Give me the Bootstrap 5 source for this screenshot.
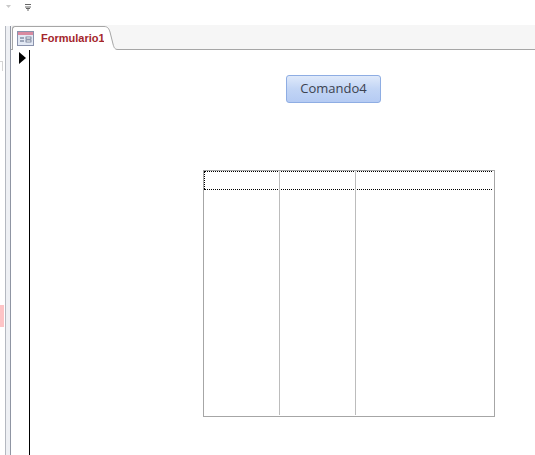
<!DOCTYPE html>
<html lang="es">
<head>
    <meta charset="UTF-8">
    <title>Formulario1</title>
    <link rel="stylesheet" href="https://cdn.jsdelivr.net/npm/bootstrap@5.3.3/dist/css/bootstrap.min.css">
    <style>
        html, body { height: 455px; overflow: hidden; background: #fff; font-family: "Open Sans", "Liberation Sans", sans-serif; }
        .qat-bar { height: 25px; padding-left: 5px; gap: 11px; }
        .work-area { height: 430px; }
        .side-gutter { width: 5px; }
        .side-tick { width: 3px; height: 10px; margin-top: 36px; border-top: 1px solid #d4d4d4; border-right: 1px solid #d4d4d4; }
        .side-mark { width: 4px; height: 22px; margin-top: 234px; background: #fdc4c6; }
        .side-strip { width: 6px; margin-top: 1px; background: #eef0f4; border-left: 1px solid #b4b8c0; border-right: 1px solid #8f95a3; }
        .doc-area { min-width: 0; }
        .tab-strip { height: 25px; background: #f6f6f6; border-bottom: 1px solid #a6a6a6; }
        .form-tab { height: 24px; width: 92px; margin-left: 1px; margin-bottom: -1px; padding-left: 4px; gap: 7px; background: #fff; border: 1px solid #a6a6a6; border-bottom: 0; border-right: 0; border-top-left-radius: 3px; color: #a4262c; font-family: "Liberation Sans", sans-serif; font-size: 11px; font-weight: 700; white-space: nowrap; }
        .tab-curve { width: 14px; height: 24px; margin-bottom: -1px; }
        .selector-col { width: 19px; border-right: 1px solid #000; padding: 2px 0 0 8px; }
        .form-body { min-width: 0; padding: 25px 0 0 173px; }
        .cmd-row { padding-left: 83px; }
        .cmd-btn { width: 95px; height: 28px; padding: 0 0 2px; border: 1px solid #8eade3; border-radius: 3px; background: linear-gradient(#dfe9fa, #c2d5f5 50%, #b5cbf3); color: #3c4250; font-family: "Open Sans", sans-serif; font-size: 13px; line-height: 24px; }
        .sub-grid { width: 292px; height: 247px; margin-top: 67px; background: #fff; border: 1px solid #a6a6a6; padding: 0 1px 1px 0; }
        .grid-col { border-right: 1px solid #bcbcbc; }
        .grid-col-a { width: 76px; }
        .grid-col-b { width: 76px; }
        .grid-head { height: 19px; margin-bottom: -19px; margin-right: 1px; border-top: 1px dotted #000; border-bottom: 1px dotted #000; }
        .first-cell { border-left: 1px dotted #000; width: 75px; height: 100%; }
    </style>
</head>
<body>
    <div class="qat-bar d-flex align-items-start">
        <svg width="8" height="10" viewBox="0 0 8 10"><path d="M1 5h5l-2.500 3z" fill="#c9c9c9"/></svg>
        <svg width="8" height="10" viewBox="0 0 8 10" class="mt-1"><path d="M1 .5h6" stroke="#666" fill="none"/><path d="M1 3h6M2 4.500h4M3 6h2" stroke="#666" fill="none"/></svg>
    </div>
    <div class="work-area d-flex">
        <div class="side-gutter flex-shrink-0">
            <div class="side-tick"></div>
            <div class="side-mark"></div>
        </div>
        <div class="side-strip flex-shrink-0"></div>
        <div class="doc-area d-flex flex-column flex-grow-1">
            <div class="tab-strip d-flex align-items-end flex-shrink-0">
                <div class="form-tab d-flex align-items-center flex-shrink-0">
                    <svg class="flex-shrink-0" width="17" height="15" viewBox="0 0 17 15">
                        <rect x=".5" y=".5" width="16" height="14" fill="#e3e9f4" stroke="#8a93ad"/>
                        <rect x="1" y="1" width="15" height="3" fill="#d98aa0"/>
                        <path d="M3 7h4M3 10h4" stroke="#55627f"/>
                        <rect x="9" y="6" width="5" height="2" fill="#fff" stroke="#55627f" stroke-width=".7"/>
                        <rect x="9" y="9" width="5" height="2" fill="#fff" stroke="#55627f" stroke-width=".7"/>
                    </svg>
                    <span>Formulario1</span>
                </div>
                <svg class="tab-curve flex-shrink-0" viewBox="1 0 14 24">
                    <path d="M0 .5h1c4 0 5 2.500 6 5.500l3 12c1 4 2 5.500 5 5.500V24H0z" fill="#fff"/>
                    <path d="M0 .5h1c4 0 5 2.500 6 5.500l3 12c1 4 2 5.500 5 5.500" fill="none" stroke="#a6a6a6"/>
                </svg>
            </div>
            <div class="d-flex flex-grow-1">
                <div class="selector-col flex-shrink-0">
                    <svg class="d-block" width="7" height="12" viewBox="0 0 7 12"><path d="M0 0l7 6-7 6z" fill="#000"/></svg>
                </div>
                <div class="form-body flex-grow-1">
                    <div class="cmd-row">
                        <button class="btn cmd-btn" type="button">Comando4</button>
                    </div>
                    <div class="sub-grid d-flex flex-column">
                        <div class="grid-head d-flex flex-shrink-0">
                            <div class="first-cell"></div>
                        </div>
                        <div class="d-flex flex-grow-1">
                            <div class="grid-col grid-col-a flex-shrink-0"></div>
                            <div class="grid-col grid-col-b flex-shrink-0"></div>
                        </div>
                    </div>
                </div>
            </div>
        </div>
    </div>
</body>
</html>
